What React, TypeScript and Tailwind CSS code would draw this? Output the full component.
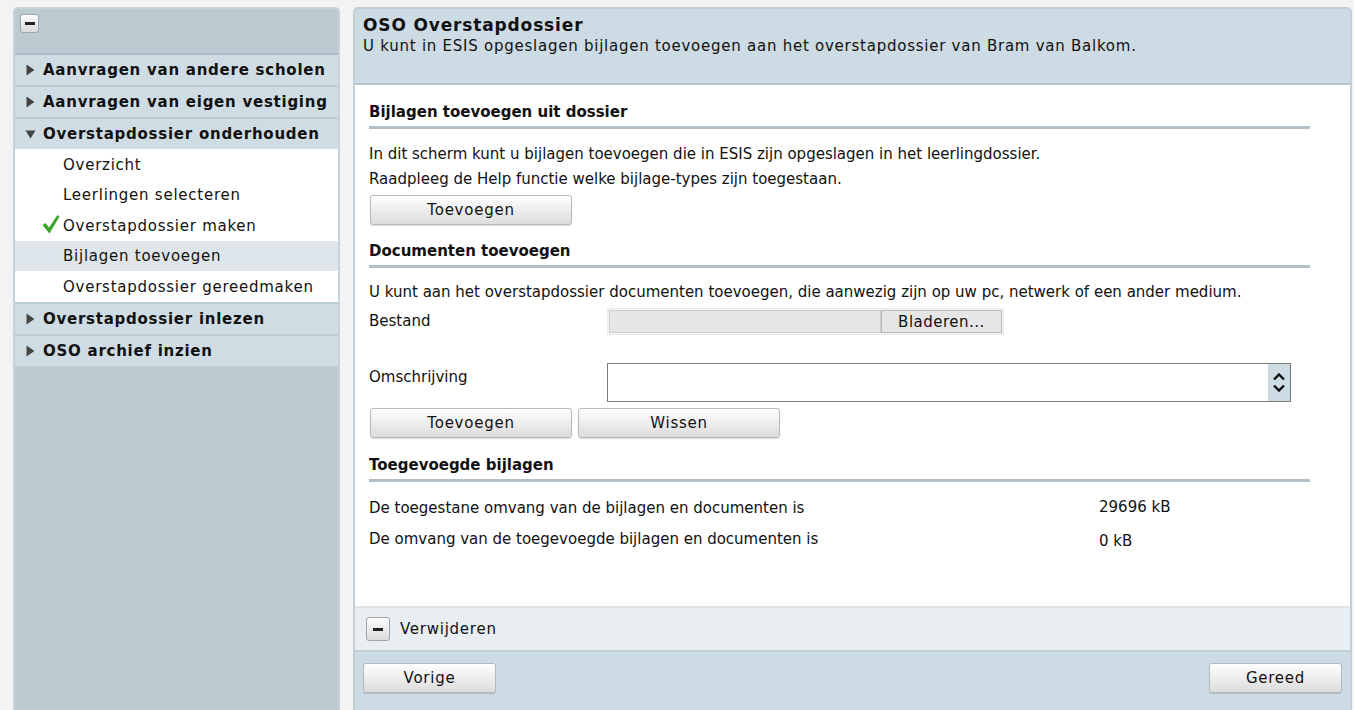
import React from "react";

const font = { fontFamily: '"DejaVu Sans", Verdana, sans-serif' };

function Btn({ children, w }: { children: React.ReactNode; w: string }) {
  return (
    <button
      className={`${w} h-[30px] rounded-[3px] border border-[#b4b9bc] bg-gradient-to-b from-[#ffffff] to-[#dcdcdc] text-[15px] leading-[20px] tracking-[0.75px] text-[#111] shadow-[0_1px_1px_rgba(0,0,0,0.15)]`}
    >
      {children}
    </button>
  );
}

function MinusBox({ size }: { size: string }) {
  return (
    <div
      className={`${size} flex items-center justify-center rounded-[3px] border border-[#9ea7ac] bg-gradient-to-b from-[#ffffff] to-[#dadada]`}
    >
      <div className="h-[3px] w-[10px] bg-[#222]" />
    </div>
  );
}

function TriRight() {
  return (
    <svg width="9" height="12" viewBox="0 0 9 12" className="shrink-0">
      <path d="M0.5 0.5 L8.5 6 L0.5 11.5 Z" fill="#444" />
    </svg>
  );
}
function TriDown() {
  return (
    <svg width="11" height="9" viewBox="0 0 11 9" className="shrink-0">
      <path d="M0.5 0.5 L10.5 0.5 L5.5 8.5 Z" fill="#444" />
    </svg>
  );
}

function MainItem({ label, open }: { label: string; open?: boolean }) {
  return (
    <div className="flex h-[32px] items-center gap-[8px] border-b-2 border-[#bccad2] bg-[#cfdce4] pl-[10px] text-[15px] font-bold leading-[20px] text-[#111]">
      <div className="flex w-[10px] justify-center">{open ? <TriDown /> : <TriRight />}</div>
      {label}
    </div>
  );
}

function SubItem({ label, active, check, h }: { label: string; active?: boolean; check?: boolean; h: string }) {
  return (
    <div
      className={`relative flex ${h} items-center pl-[48px] text-[15px] leading-[20px] text-[#111] ${
        active ? "bg-[#dfe6eb]" : "bg-white"
      }`}
    >
      {check && (
        <svg width="18" height="20" viewBox="0 0 18 20" className="absolute left-[27px] top-[4px]">
          <path d="M0.5 11 L3.5 9 L7 13.5 L15.5 1 L17.5 2.5 L7.5 19.5 Z" fill="#3aa12a" />
        </svg>
      )}
      {label}
    </div>
  );
}

function SectionHead({ label }: { label: string }) {
  return (
    <div className="mr-[40px] border-b-[3px] border-[#b2bfc7] pb-[4px] text-[15px] font-bold leading-[20px] text-[#111]">
      {label}
    </div>
  );
}

export default function App() {
  return (
    <div
      className="flex h-[710px] w-[1354px] gap-[13px] overflow-hidden bg-[#f3f3f3] pl-[13px] pt-[7px] tracking-[0.75px]"
      style={font}
    >
      {/* Sidebar */}
      <div className="flex w-[327px] flex-col overflow-hidden rounded-t-[5px] border-2 border-b-0 border-[#c8d3d9] bg-[#bccad1]">
        <div className="h-[46px] border-b-2 border-[#aebdc5] pl-[5px] pt-[5px]">
          <MinusBox size="w-[19px] h-[19px]" />
        </div>
        <MainItem label="Aanvragen van andere scholen" />
        <MainItem label="Aanvragen van eigen vestiging" />
        <MainItem label="Overstapdossier onderhouden" open />
        <div className="-mt-[2px]">
          <SubItem h="h-[31px]" label="Overzicht" />
          <SubItem h="h-[30px]" label="Leerlingen selecteren" />
          <SubItem h="h-[31px]" label="Overstapdossier maken" check />
          <SubItem h="h-[30px]" label="Bijlagen toevoegen" active />
          <SubItem h="h-[31px]" label="Overstapdossier gereedmaken" />
        </div>
        <div className="border-t-2 border-[#bccad2]">
          <MainItem label="Overstapdossier inlezen" />
          <MainItem label="OSO archief inzien" />
        </div>
      </div>

      {/* Main */}
      <div className="flex w-[999px] flex-col overflow-hidden rounded-t-[5px] border-2 border-b-0 border-[#c3cfd6] bg-[#cddbe4]">
        <div className="h-[76px] shrink-0 border-b-2 border-[#b5c3cb] px-[8px] pt-[5px] text-[#111]">
          <div className="text-[17px] font-bold leading-[22px] tracking-[0.85px]">OSO Overstapdossier</div>
          <div className="text-[15px] leading-[20px]">
            U kunt in ESIS opgeslagen bijlagen toevoegen aan het overstapdossier van Bram van Balkom.
          </div>
        </div>

        <div className="h-[521px] shrink-0 bg-white pl-[14px] pt-[17px] text-[15px] leading-[20px] tracking-normal text-[#111]">
          <SectionHead label="Bijlagen toevoegen uit dossier" />
          <div className="mt-[13px] leading-[25px]">
            <div>In dit scherm kunt u bijlagen toevoegen die in ESIS zijn opgeslagen in het leerlingdossier.</div>
            <div>Raadpleeg de Help functie welke bijlage-types zijn toegestaan.</div>
          </div>
          <div className="mt-[3px] flex pl-[1px]">
            <Btn w="w-[202px]">Toevoegen</Btn>
          </div>

          <div className="mt-[16px]">
            <SectionHead label="Documenten toevoegen" />
          </div>
          <div className="mt-[14px]">
            U kunt aan het overstapdossier documenten toevoegen, die aanwezig zijn op uw pc, netwerk of een ander medium.
          </div>
          <div className="mt-[6px] flex">
            <div className="w-[238px] pt-[3px]">Bestand</div>
            <div className="flex h-[27px] w-[397px] border border-[#ececec] bg-[#f3f3f3] p-[1px]">
              <div className="flex-1 border border-[#cfcfcf] bg-[#e6e6e6]" />
              <div className="flex w-[121px] items-center justify-center border border-[#b9b9b9] bg-[#e6e6e6] text-[15px] tracking-[0.5px]">
                Bladeren...
              </div>
            </div>
          </div>
          <div className="mt-[28px] flex">
            <div className="w-[238px] pt-[4px]">Omschrijving</div>
            <div className="flex h-[39px] w-[684px] border border-[#7a7a7a] bg-white">
              <div className="flex-1" />
              <div className="flex w-[22px] flex-col items-center justify-center gap-[3px] bg-[#cddbe4]">
                <svg width="14" height="9" viewBox="0 0 14 9">
                  <path d="M2 7.5 L7 2.5 L12 7.5" stroke="#111" strokeWidth="2.4" fill="none" />
                </svg>
                <svg width="14" height="9" viewBox="0 0 14 9">
                  <path d="M2 1.5 L7 6.5 L12 1.5" stroke="#111" strokeWidth="2.4" fill="none" />
                </svg>
              </div>
            </div>
          </div>
          <div className="mt-[6px] flex gap-[6px] pl-[1px]">
            <Btn w="w-[202px]">Toevoegen</Btn>
            <Btn w="w-[202px]">Wissen</Btn>
          </div>

          <div className="mt-[17px]">
            <SectionHead label="Toegevoegde bijlagen" />
          </div>
          <div className="mt-[16px] flex">
            <div className="w-[730px]">De toegestane omvang van de bijlagen en documenten is</div>
            <div className="-mt-[1px]">29696 kB</div>
          </div>
          <div className="mt-[11px] flex">
            <div className="w-[730px]">De omvang van de toegevoegde bijlagen en documenten is</div>
            <div className="mt-[2px]">0 kB</div>
          </div>
        </div>

        <div className="flex h-[44px] shrink-0 items-center gap-[10px] border-t-2 border-[#dbe3e8] bg-[#e8eef1] pl-[11px] text-[15px] leading-[20px] text-[#111]">
          <MinusBox size="w-[24px] h-[24px]" />
          Verwijderen
        </div>
        <div className="flex flex-1 items-start justify-between border-t-2 border-[#c3d0d8] bg-[#cddbe4] px-[8px] pt-[11px]">
          <Btn w="w-[133px]">Vorige</Btn>
          <Btn w="w-[133px]">Gereed</Btn>
        </div>
      </div>
    </div>
  );
}
